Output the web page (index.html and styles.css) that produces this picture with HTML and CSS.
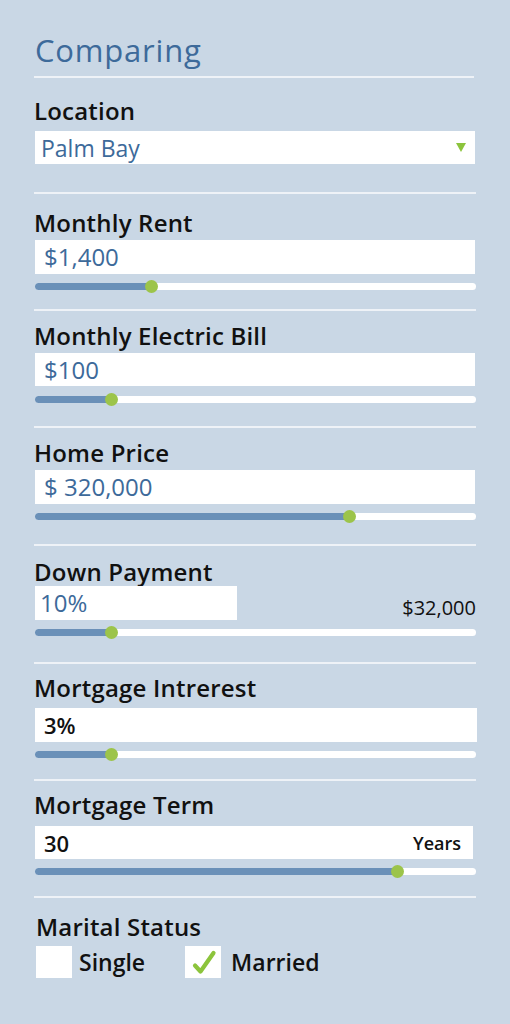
FILE: index.html
```html
<!DOCTYPE html>
<html>
<head>
<meta charset="utf-8">
<link rel="stylesheet" href="styles.css">
</head>
<body>
<div class="panel">
  <h1 class="title">Comparing</h1>

  <div class="field f-location">
    <div class="label">Location</div>
    <div class="select"><span class="val loc">Palm Bay</span><span class="caret"></span></div>
  </div>

  <div class="field f-rent">
    <div class="label">Monthly Rent</div>
    <div class="input"><span class="val">$1,400</span></div>
    <div class="slider"><div class="fill" style="width:116px"></div><div class="thumb" style="left:116px"></div></div>
  </div>

  <div class="field f-electric">
    <div class="label">Monthly Electric Bill</div>
    <div class="input"><span class="val">$100</span></div>
    <div class="slider"><div class="fill" style="width:76px"></div><div class="thumb" style="left:76px"></div></div>
  </div>

  <div class="field f-home tall">
    <div class="label">Home Price</div>
    <div class="input"><span class="val">$ 320,000</span></div>
    <div class="slider"><div class="fill" style="width:314px"></div><div class="thumb" style="left:314px"></div></div>
  </div>

  <div class="field f-down tall">
    <div class="label">Down Payment</div>
    <div class="row">
      <div class="input short"><span class="val">10%</span></div>
      <span class="amount">$32,000</span>
    </div>
    <div class="slider"><div class="fill" style="width:76px"></div><div class="thumb" style="left:76px"></div></div>
  </div>

  <div class="field f-interest">
    <div class="label">Mortgage Intrerest</div>
    <div class="input wide"><span class="val dark">3%</span></div>
    <div class="slider"><div class="fill" style="width:76px"></div><div class="thumb" style="left:76px"></div></div>
  </div>

  <div class="field f-term">
    <div class="label">Mortgage Term</div>
    <div class="input narrow"><span class="val dark">30</span><span class="unit">Years</span></div>
    <div class="slider"><div class="fill" style="width:362px"></div><div class="thumb" style="left:362px"></div></div>
  </div>

  <div class="field f-status last">
    <div class="label status">Marital Status</div>
    <div class="options">
      <div class="option"><span class="box"></span><span class="opt-text">Single</span></div>
      <div class="option"><span class="box"><svg width="36" height="32" viewBox="0 0 36 32"><path d="M10 19.5 L15.5 25.5 L28.5 7" fill="none" stroke="#8cc43c" stroke-width="4.2" stroke-linecap="round" stroke-linejoin="round"/></svg></span><span class="opt-text married">Married</span></div>
    </div>
  </div>
</div>
</body>
</html>
```

FILE: styles.css
```css
* { box-sizing: border-box; }
html, body { margin: 0; padding: 0; }
body {
  background: #c9d7e5;
  font-family: "Open Sans", "Noto Sans", sans-serif;
  width: 510px;
  height: 1024px;
  overflow: hidden;
}
.panel {
  padding: 28px 34px 0 34px;
  width: 510px;
}
.title {
  margin: 0;
  font-size: 31px;
  font-weight: 400;
  letter-spacing: 0.8px;
  color: #3d6a9a;
  line-height: 44px;
  padding-left: 1px;
  padding-bottom: 4px;
  border-bottom: 2px solid #eef2f7;
  width: 440px;
}
.field {
  width: 442px;
  border-bottom: 2px solid #eef2f7;
  height: 117px;
  padding-top: 10px;
}
.field.tall { height: 118px; }
.field.last { border-bottom: none; }

.f-location { padding-top: 18px; height: 116px; }
.f-rent { padding-top: 14px; }
.f-electric { padding-top: 10px; }
.f-home { padding-top: 10px; }
.f-down { padding-top: 11px; }
.f-interest { padding-top: 9px; }
.f-term { padding-top: 9px; }
.f-status { padding-top: 14px; }

.label {
  font-size: 24px;
  font-weight: 600;
  letter-spacing: 0.2px;
  color: #111;
  line-height: 30px;
  height: 30px;
}
.select, .input {
  background: #fff;
  height: 34px;
  width: 440px;
  margin-left: 1px;
  margin-top: 2px;
  display: flex;
  align-items: center;
  justify-content: space-between;
}
.f-location .select { margin-top: 5px; height: 33px; }
.f-electric .input { height: 33px; }
.f-interest .input { margin-top: 5px; }
.f-term .input { margin-top: 6px; height: 33px; }
.select {
  padding: 0 9px 0 6px;
}
.input {
  padding: 0 12px 0 9px;
}
.input.short { width: 202px; padding-left: 5px; }
.input.wide { width: 442px; }
.input.narrow { width: 438px; }
.val {
  font-size: 24px;
  color: #3d6a9a;
  line-height: 34px;
}
.val.loc { font-size: 23px; }
.val.dark {
  color: #111;
  font-weight: 600;
  font-size: 22px;
}
.unit {
  font-size: 18px;
  color: #111;
  font-weight: 600;
}
.caret {
  width: 0;
  height: 0;
  border-left: 5px solid transparent;
  border-right: 5px solid transparent;
  border-top: 9px solid #8cc43c;
}
.row {
  display: flex;
  justify-content: space-between;
  align-items: flex-end;
  width: 442px;
  margin-top: -1px;
}
.row .input { margin-top: 0; }
.amount {
  font-size: 20px;
  color: #111;
  line-height: 22px;
  padding-bottom: 1px;
}
.slider {
  position: relative;
  margin-top: 9px;
  margin-left: 1px;
  width: 441px;
  height: 7px;
  background: #fff;
  border-radius: 4px;
}
.f-electric .slider { margin-top: 10px; }
.fill {
  height: 7px;
  background: #6a90b8;
  border-radius: 4px 0 0 4px;
}
.thumb {
  position: absolute;
  top: -3px;
  width: 13px;
  height: 13px;
  margin-left: -6px;
  border-radius: 50%;
  background: #9cc44a;
}
.label.status {
  margin-left: 2px;
}
.options {
  display: flex;
  margin-top: 4px;
  margin-left: 2px;
}
.option {
  display: flex;
  align-items: center;
  margin-right: 40px;
}
.box {
  width: 36px;
  height: 32px;
  background: #fff;
  display: block;
}
.box svg { display: block; }
.opt-text {
  font-size: 23px;
  font-weight: 600;
  color: #111;
  margin-left: 7px;
}
.opt-text.married { margin-left: 10px; }
```
